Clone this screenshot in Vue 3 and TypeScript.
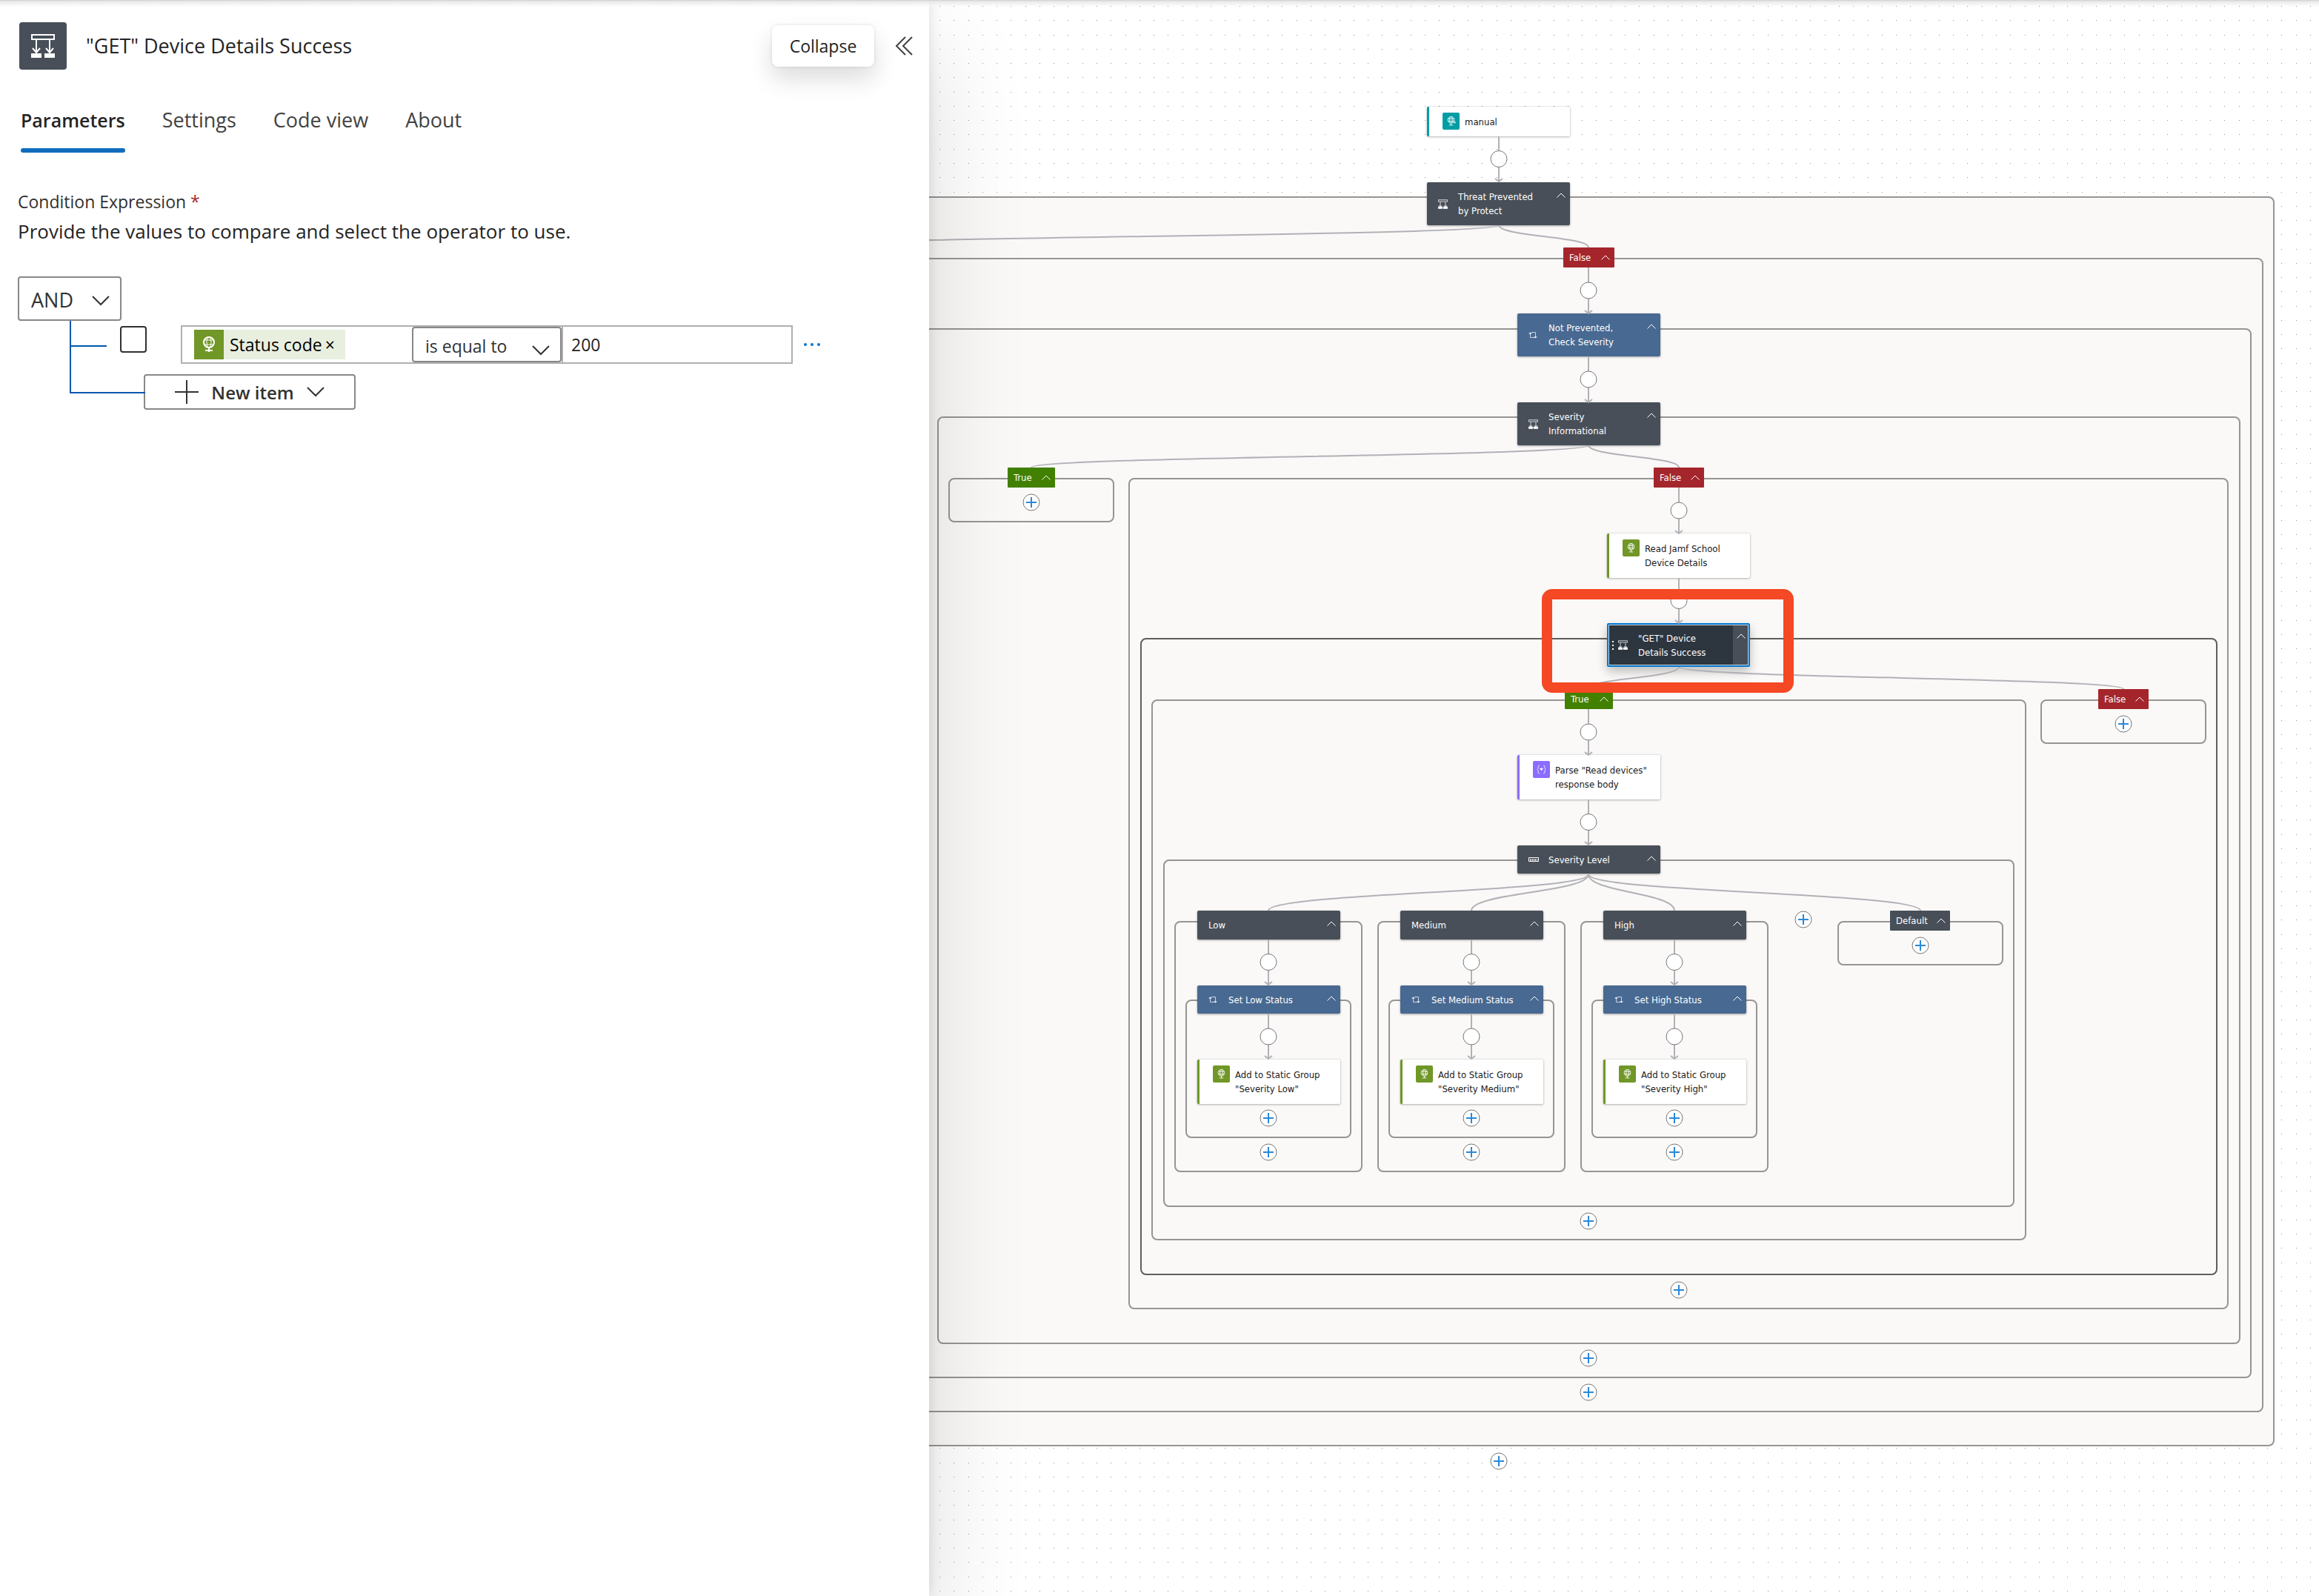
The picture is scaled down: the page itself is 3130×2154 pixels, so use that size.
<script setup lang="ts">
import { ref } from 'vue'

type IconName = 'condition' | 'scope' | 'switch' | 'http' | 'request' | 'parse'

interface Frame { x: number; y: number; right: number; bottom: number; active?: boolean }
interface Card { x: number; y: number; h: number; lines: string[]; icon: IconName; accent: string }
interface Scope { x: number; y: number; h: number; lines: string[]; icon?: IconName; tone: 'slate' | 'blue'; selected?: boolean }
interface Branch { x: number; y: number; w: number; text: string; tone: 'yes' | 'no' | 'slate' }
interface Point { x: number; y: number }
interface Link { x: number; from: number; to: number }

const tabs = ['Parameters', 'Settings', 'Code view', 'About']
const activeTab = ref('Parameters')
const groupOperator = ref('AND')
const comparison = ref('is equal to')
const comparedValue = ref('200')
const rowChecked = ref(false)

const laneCenters = [1712, 1986, 2260]
const laneNames = ['Low', 'Medium', 'High']

const frames: Frame[] = [
  { x: 1000, y: 265, right: 3070, bottom: 1952 },
  { x: 1016, y: 348, right: 3055, bottom: 1906 },
  { x: 1032, y: 443, right: 3039, bottom: 1860 },
  { x: 1265, y: 562, right: 3024, bottom: 1814 },
  { x: 1280, y: 645, right: 1504, bottom: 705 },
  { x: 1523, y: 645, right: 3008, bottom: 1767 },
  { x: 1539, y: 861, right: 2993, bottom: 1721, active: true },
  { x: 1554, y: 944, right: 2735, bottom: 1674 },
  { x: 2754, y: 944, right: 2978, bottom: 1004 },
  { x: 1570, y: 1160, right: 2719, bottom: 1629 },
  { x: 2480, y: 1243, right: 2704, bottom: 1303 },
  ...laneCenters.flatMap((c) => [
    { x: c - 127, y: 1243, right: c + 127, bottom: 1582 },
    { x: c - 112, y: 1349, right: c + 112, bottom: 1536 },
  ]),
]

const cards: Card[] = [
  { x: 1926, y: 144, h: 40, lines: ['manual'], icon: 'request', accent: '#009da5' },
  { x: 2169, y: 720, h: 60, lines: ['Read Jamf School', 'Device Details'], icon: 'http', accent: '#709727' },
  { x: 2048, y: 1019, h: 60, lines: ['Parse "Read devices"', 'response body'], icon: 'parse', accent: '#8c6cff' },
  ...laneCenters.map((c, i): Card => ({
    x: c - 96, y: 1430, h: 60, lines: ['Add to Static Group', `"Severity ${laneNames[i]}"`], icon: 'http', accent: '#709727',
  })),
]

const scopes: Scope[] = [
  { x: 1926, y: 246, h: 58, lines: ['Threat Prevented', 'by Protect'], icon: 'condition', tone: 'slate' },
  { x: 2048, y: 423, h: 58, lines: ['Not Prevented,', 'Check Severity'], icon: 'scope', tone: 'blue' },
  { x: 2048, y: 543, h: 58, lines: ['Severity', 'Informational'], icon: 'condition', tone: 'slate' },
  { x: 2169, y: 841, h: 59, lines: ['"GET" Device', 'Details Success'], icon: 'condition', tone: 'slate', selected: true },
  { x: 2048, y: 1141, h: 38, lines: ['Severity Level'], icon: 'switch', tone: 'slate' },
  ...laneCenters.flatMap((c, i): Scope[] => [
    { x: c - 96, y: 1229, h: 39, lines: [laneNames[i]], tone: 'slate' },
    { x: c - 96, y: 1330, h: 38, lines: [`Set ${laneNames[i]} Status`], icon: 'scope', tone: 'blue' },
  ]),
]

const branches: Branch[] = [
  { x: 2110, y: 334, w: 69, text: 'False', tone: 'no' },
  { x: 1360, y: 631, w: 64, text: 'True', tone: 'yes' },
  { x: 2232, y: 631, w: 68, text: 'False', tone: 'no' },
  { x: 2112, y: 930, w: 65, text: 'True', tone: 'yes' },
  { x: 2832, y: 930, w: 68, text: 'False', tone: 'no' },
  { x: 2551, y: 1229, w: 81, text: 'Default', tone: 'slate' },
]

const adders: Point[] = [
  { x: 1392, y: 678 }, { x: 2866, y: 977 }, { x: 2434, y: 1241 }, { x: 2592, y: 1276 },
  { x: 2144, y: 1648 }, { x: 2266, y: 1741 }, { x: 2144, y: 1833 }, { x: 2144, y: 1879 }, { x: 2023, y: 1972 },
  ...laneCenters.flatMap((c) => [{ x: c, y: 1509 }, { x: c, y: 1555 }]),
]

const links: Link[] = [
  { x: 2023, from: 184, to: 245 },
  { x: 2144, from: 361, to: 423 },
  { x: 2144, from: 481, to: 543 },
  { x: 2266, from: 658, to: 720 },
  { x: 2266, from: 780, to: 841 },
  { x: 2144, from: 957, to: 1019 },
  { x: 2144, from: 1079, to: 1140 },
  ...laneCenters.flatMap((c) => [
    { x: c, from: 1268, to: 1329 },
    { x: c, from: 1369, to: 1429 },
  ]),
]

const curve = (x1: number, y1: number, x2: number, y2: number) => {
  const mid = (y1 + y2) / 2
  return `M${x1} ${y1}C${x1} ${mid} ${x2} ${mid} ${x2} ${y2}`
}

const forks: string[] = [
  curve(2023, 304, 1070, 334),
  curve(2023, 304, 2144, 334),
  curve(2144, 601, 1392, 631),
  curve(2144, 601, 2266, 631),
  curve(2266, 900, 2144, 930),
  curve(2266, 900, 2866, 930),
  ...laneCenters.map((c) => curve(2144, 1180, c, 1229)),
  curve(2144, 1180, 2592, 1229),
]

// The zoomed grid is a little over 19px, so every dot snaps to the nearest pixel.
const gridStep = 1927
const dots = (() => {
  let d = ''
  for (let row = 0; row < 112; row++) {
    const y = Math.round((row * gridStep) / 100 + 8)
    for (let col = 0; col < 98; col++) {
      d += `M${Math.round((col * gridStep) / 100 + 1268)} ${y}h1v1h-1z`
    }
  }
  return d
})()

const box = (x: number, y: number, w: number, h: number) => ({
  left: `${x}px`, top: `${y}px`, width: `${w}px`, height: `${h}px`,
})
</script>

<template>
  <div class="designer">
    <main class="canvas" aria-label="Workflow">
      <svg class="layer" aria-hidden="true"><path :d="dots" fill="#8f8f8f" /></svg>

      <div
        v-for="(f, i) in frames" :key="'f' + i"
        class="frame" :class="{ active: f.active }"
        :style="box(f.x, f.y, f.right - f.x, f.bottom - f.y)"
      />

      <div
        v-for="(c, i) in cards" :key="'c' + i"
        class="card" :style="{ ...box(c.x, c.y, 193, c.h), borderLeftColor: c.accent }"
      >
        <span class="tile" :style="{ background: c.accent }">
          <svg v-if="c.icon === 'parse'" width="13" height="13" viewBox="0 0 13 13" fill="none" stroke="#fff">
            <path d="M4 1Q2 1 2 3V5L1 6.500L2 8V10Q2 12 4 12M9 1q2 0 2 2v2l1 1.500l-1 1.500v2q0 2-2 2" stroke-width=".8" />
            <path d="M4.500 5h4L6.500 8z" fill="#fff" stroke-width=".5" />
          </svg>
          <svg v-else width="13" height="13" viewBox="0 0 24 24" fill="none" stroke="#fff" stroke-width="1.600">
            <circle cx="12" cy="9" r="8" />
            <ellipse cx="12" cy="9" rx="3.500" ry="8" />
            <path d="M5 6h14M5 12h14M12 17v5M7 22h10" />
            <path v-if="c.icon === 'request'" d="M17 15h6l-3-3m3 3l-3 3" />
          </svg>
        </span>
        <span class="node-text"><span v-for="l in c.lines" :key="l">{{ l }}</span></span>
      </div>

      <div
        v-for="(s, i) in scopes" :key="'s' + i"
        class="scope" :class="[s.tone, { selected: s.selected }]" :style="box(s.x, s.y, 193, s.h)"
      >
        <svg v-if="s.selected" class="grip" width="4" height="14" viewBox="0 0 4 14" fill="#fff">
          <path d="M1 1h2v2h-2zM1 6h2v2h-2zM1 11h2v2h-2z" />
        </svg>
        <span v-if="s.icon" class="glyph">
          <svg v-if="s.icon === 'condition'" width="13" height="13" viewBox="15 15 34 34" fill="none" stroke="#fff" stroke-width="2">
            <path d="M16 17h32v6H16zM23 24v16M41 24v16M19 36l4 5l4-5M37 36l4 5l4-5" />
            <path d="M16 41h14v7H16zM34 41h14v7H34z" fill="#fff" />
          </svg>
          <svg v-else-if="s.icon === 'scope'" width="12" height="9" viewBox="0 0 12 9" fill="none" stroke="#c8d4e3">
            <path d="M2.500 2V7.500H8M4 .500H9.500V7" />
            <path d="M0 2.500L2.500 .500L5 2.500zM7 6.500h5L9.500 8.500z" fill="#fff" stroke="none" />
          </svg>
          <svg v-else width="14" height="6" viewBox="0 0 14 6" fill="none" stroke="#fff">
            <path d="M.500 .500h13v5H.500z" />
            <path d="M2 3.500h10" stroke-width="2" stroke-dasharray="2 1" />
          </svg>
        </span>
        <span class="node-text"><span v-for="l in s.lines" :key="l">{{ l }}</span></span>
        <button class="fold" type="button" :aria-label="'Collapse ' + s.lines.join(' ')">
          <svg width="12" height="8" viewBox="0 0 12 8" fill="none" stroke="currentColor"><path d="M.500 6.500L6 1l5.500 5.500" /></svg>
        </button>
      </div>

      <svg class="layer" aria-hidden="true" fill="none">
        <g stroke="#b1b1b7" stroke-width="2">
          <path v-for="(d, i) in forks" :key="'k' + i" :d="d" />
          <path
            v-for="(l, i) in links" :key="'l' + i"
            :d="`M${l.x} ${l.from}V${l.to}M${l.x - 5} ${l.to - 4}l5 4l5-4`"
          />
        </g>
        <circle
          v-for="(l, i) in links" :key="'o' + i"
          :cx="l.x" :cy="(l.from + l.to) / 2" r="11" fill="#fff" stroke="#777"
        />
      </svg>

      <button
        v-for="(b, i) in branches" :key="'b' + i"
        type="button" class="branch" :class="b.tone" :style="box(b.x, b.y, b.w, 27)"
      >
        {{ b.text }}
        <svg width="12" height="8" viewBox="0 0 12 8" fill="none" stroke="currentColor"><path d="M.500 6.500L6 1l5.500 5.500" /></svg>
      </button>

      <button
        v-for="(a, i) in adders" :key="'a' + i"
        type="button" class="adder" aria-label="Add an action" :style="box(a.x - 12, a.y - 12, 24, 24)"
      >
        <svg width="24" height="24" viewBox="0 0 24 24" fill="none">
          <circle cx="12" cy="12" r="11" fill="#fff" stroke="#777" />
          <path d="M12 5v14M5 12h14" stroke="#2b88d8" stroke-width="2" />
        </svg>
      </button>

      <div class="highlight" />
    </main>

    <aside class="panel">
      <header class="panel-head">
        <span class="panel-icon">
          <svg width="64" height="64" viewBox="0 0 64 64" fill="none" stroke="#fff" stroke-width="2">
            <path d="M17 17h30v6H17zM23 24v16M41 24v16M18 35l5 6l5-6M36 35l5 6l5-6" />
            <path d="M16 42h14v6H16zM34 42h14v6H34z" fill="#fff" stroke="none" />
          </svg>
        </span>
        <h1>"GET" Device Details Success</h1>
        <button type="button" class="collapse">Collapse</button>
        <button type="button" class="chevrons" aria-label="Collapse panel">
          <svg width="24" height="26" viewBox="0 0 24 26" fill="none" stroke="#424242" stroke-width="2">
            <path d="M14 1L2 13l12 12M23 1L11 13l12 12" />
          </svg>
        </button>
      </header>

      <div class="tabs" role="tablist">
        <button
          v-for="t in tabs" :key="t" type="button" role="tab"
          :aria-selected="t === activeTab" :class="{ current: t === activeTab }" @click="activeTab = t"
        >{{ t }}</button>
      </div>

      <h2>Condition Expression <span class="required">*</span></h2>
      <p class="hint">Provide the values to compare and select the operator to use.</p>

      <div class="group">
        <label class="picker operator">
          <select v-model="groupOperator" aria-label="Group operator">
            <option>AND</option>
            <option>OR</option>
          </select>
          <svg width="24" height="14" viewBox="0 0 24 14" fill="none" stroke="#333" stroke-width="2"><path d="M1 1l11 11L23 1" /></svg>
        </label>

        <div class="item first">
          <input v-model="rowChecked" type="checkbox" aria-label="Select row">
          <div class="row">
            <div class="operand">
              <span class="token">
                <svg width="40" height="40" viewBox="0 0 40 40" fill="none" stroke="#fff">
                  <circle cx="20" cy="17" r="7" stroke-width="2" />
                  <ellipse cx="20" cy="17" rx="3" ry="7" />
                  <path d="M14 14h12M14 20h12" />
                  <path d="M20 24v6M15 28h10" stroke-width="2" />
                </svg>
                <span>Status code</span>
                <button type="button" aria-label="Remove Status code">×</button>
              </span>
            </div>
            <label class="picker comparison">
              <select v-model="comparison" aria-label="Comparison">
                <option>is equal to</option>
                <option>is not equal to</option>
              </select>
              <svg width="24" height="14" viewBox="0 0 24 14" fill="none" stroke="#333" stroke-width="2"><path d="M1 1l11 11L23 1" /></svg>
            </label>
            <input v-model="comparedValue" class="value" type="text" aria-label="Value">
          </div>
          <button type="button" class="more" aria-label="More commands">
            <svg width="24" height="6" viewBox="0 0 24 6" fill="#0078d4"><circle cx="3" cy="3" r="2" /><circle cx="12" cy="3" r="2" /><circle cx="21" cy="3" r="2" /></svg>
          </button>
        </div>

        <div class="item last">
          <button type="button" class="new-item">
            <svg width="32" height="32" viewBox="0 0 32 32" fill="none" stroke="#333" stroke-width="2"><path d="M16 0v32M0 16h32" /></svg>
            <span>New item</span>
            <svg width="24" height="14" viewBox="0 0 24 14" fill="none" stroke="#333" stroke-width="2"><path d="M1 1l11 11L23 1" /></svg>
          </button>
        </div>
      </div>
    </aside>

    <div class="top-shade" />
  </div>
</template>

<style>
body {
  margin: 0;
  background: #fff;
}
</style>

<style scoped>
.designer {
  position: relative;
  display: grid;
  grid-template-columns: 1254px 1fr;
  min-height: 100vh;
  overflow: hidden;
  background: #fff;
  color: #242424;
  font-family: "Open Sans", "Noto Sans", sans-serif;
}
.designer * { box-sizing: border-box; }
button, select, input { font: inherit; color: inherit; }
button { padding: 0; border: 0; background: none; cursor: pointer; }
svg { display: block; flex: none; }

.canvas {
  position: relative;
  grid-area: 1 / 1 / 2 / 3;
  overflow: hidden;
  font: 13px/19px "DejaVu Sans Condensed", "Noto Sans", sans-serif;
}
.layer {
  position: absolute;
  inset: 0;
  width: 100%;
  height: 100%;
}
.frame {
  position: absolute;
  border: 2px solid #979593;
  border-radius: 8px;
  background: #faf9f8;
}
.frame.active { border-color: #605e5c; }

.card, .scope { position: absolute; display: flex; }
.card {
  align-items: flex-start;
  gap: 7px;
  padding: 8px 0 0 18px;
  border-left: 3px solid;
  border-radius: 2px;
  background: #fff;
  color: #1b1a19;
  box-shadow: 0 0 2px rgba(0, 0, 0, .2), 0 1px 3px rgba(0, 0, 0, .25);
}
.tile {
  display: flex;
  align-items: center;
  justify-content: center;
  width: 23px;
  height: 23px;
  border-radius: 2px;
}
.card .node-text { padding-top: 3px; }
.node-text { display: flex; flex-direction: column; white-space: nowrap; }
.scope {
  align-items: center;
  padding-left: 15px;
  border-radius: 2px;
  color: #fff;
  box-shadow: 0 1px 3px rgba(0, 0, 0, .35);
}
.slate { background: #484f58; }
.blue { background: #486991; }
.glyph { display: flex; width: 27px; }
.fold {
  position: absolute;
  top: 14px;
  right: 6px;
}
.selected {
  border: 2px solid #0078d4;
  padding-left: 13px;
  background: linear-gradient(90deg, #2d353e 168px, #484f58 168px);
  box-shadow: inset 0 0 0 1px #d0d0d0, 0 6px 14px rgba(0, 0, 0, .25);
}
.selected .fold { top: 12px; right: 4px; }
.grip { position: absolute; left: 4px; }

.branch {
  position: absolute;
  display: flex;
  align-items: center;
  justify-content: space-between;
  padding: 0 6px 0 8px;
  border-radius: 1px;
  color: #fff;
}
.yes { background: #428000; }
.no { background: #a4262c; }
.adder { position: absolute; }
.highlight {
  position: absolute;
  left: 2081px;
  top: 795px;
  width: 340px;
  height: 140px;
  border: 14px solid #f54824;
  border-radius: 14px;
}

.panel {
  position: relative;
  grid-area: 1 / 1 / 2 / 2;
  padding: 30px 22px 40px 24px;
  background: #fff;
  box-shadow: 0 0 16px rgba(0, 0, 0, .12), 0 64px 128px rgba(0, 0, 0, .14);
}
.panel-head {
  display: flex;
  align-items: center;
  height: 64px;
  padding-left: 2px;
}
.panel-icon {
  border-radius: 4px;
  background: #484f58;
}
h1 {
  flex: 1;
  margin: 0 0 0 26px;
  font-size: 27px;
  font-weight: 400;
  line-height: 36px;
}
.collapse {
  width: 138px;
  height: 56px;
  margin-right: 28px;
  border-radius: 8px;
  background: #fff;
  font-size: 23px;
  box-shadow: 0 0 4px rgba(0, 0, 0, .12), 0 16px 32px rgba(0, 0, 0, .14);
}
.tabs {
  display: flex;
  gap: 50px;
  margin: 51px 0 0 4px;
}
.tabs button {
  padding-bottom: 21px;
  border-bottom: 6px solid transparent;
  font-size: 27px;
  line-height: 34px;
  color: #424242;
}
.tabs .current {
  position: relative;
  color: #242424;
  font-size: 25px;
  font-weight: 600;
}
.tabs .current::after {
  content: "";
  position: absolute;
  right: 0;
  bottom: -6px;
  left: 0;
  height: 6px;
  border-radius: 3px;
  background: #0f6cbd;
}
h2 {
  margin: 50px 0 0;
  font-size: 23px;
  font-weight: 400;
  line-height: 32px;
  color: #323130;
}
.required { color: #a4262c; }
.hint {
  margin: 4px 0 0;
  font-size: 26px;
  line-height: 40px;
}
.group { margin-top: 41px; }
.picker {
  position: relative;
  display: block;
  border: 2px solid #8a8886;
  border-radius: 4px;
  color: #323130;
}
.picker select {
  width: 100%;
  height: 100%;
  border: 0;
  background: none;
  appearance: none;
}
.picker svg { position: absolute; pointer-events: none; }
.operator {
  width: 140px;
  height: 60px;
  font-size: 27px;
}
.operator select { padding: 2px 16px 0; }
.operator svg { top: 24px; right: 14px; }
.item {
  position: relative;
  display: flex;
  margin-left: 70px;
}
.item::before {
  content: "";
  position: absolute;
  left: 0;
  border: solid #0058ad;
  border-width: 0 0 2px 2px;
}
.first { padding: 6px 0 0 68px; }
.first::before { top: 0; width: 48px; height: 33px; }
.last { padding: 14px 0 0 100px; }
.last::before { top: -58px; width: 100px; height: 96px; }
.item input[type="checkbox"] {
  width: 36px;
  height: 36px;
  margin: 1px 46px 0 0;
  border: 2px solid #323130;
  border-radius: 4px;
  appearance: none;
}
.row {
  display: flex;
  width: 826px;
  height: 52px;
  border: 2px solid #b0b0b0;
  font-size: 23px;
}
.operand {
  display: flex;
  align-items: center;
  width: 310px;
  padding-left: 16px;
}
.token {
  display: flex;
  align-items: center;
  width: 204px;
  height: 40px;
  background: linear-gradient(90deg, #709727 40px, #e8efdf 40px);
  color: #000;
  white-space: nowrap;
}
.token span { margin: 0 4px 0 8px; }
.comparison { width: 202px; }
.comparison select { padding: 4px 0 0 16px; }
.comparison svg { right: 14px; bottom: 7px; }
.value {
  flex: 1;
  min-width: 0;
  padding: 0 0 0 11px;
  border: 0;
  border-left: 2px solid #b0b0b0;
  background: none;
}
.more { margin-left: 14px; }
.new-item {
  display: flex;
  align-items: center;
  justify-content: center;
  gap: 17px;
  width: 286px;
  height: 48px;
  border: 2px solid #8a8886;
  border-radius: 4px;
  background: #fff;
  color: #323130;
  font-size: 24px;
  font-weight: 600;
}
.top-shade {
  position: absolute;
  top: 0;
  right: 0;
  left: 0;
  height: 9px;
  background: linear-gradient(#cfcfcf, #e9e9e9 2px, rgba(255, 255, 255, 0));
  pointer-events: none;
}
</style>
